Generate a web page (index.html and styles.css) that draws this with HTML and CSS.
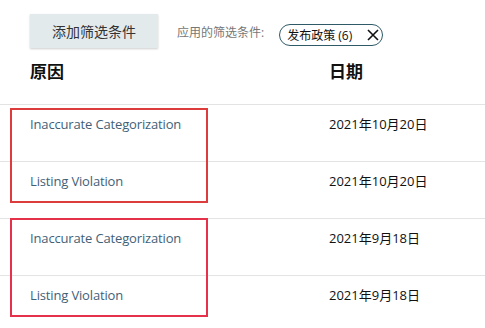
FILE: index.html
```html
<!DOCTYPE html>
<html lang="zh-CN">
<head>
  <meta charset="UTF-8" />
  <meta name="viewport" content="width=device-width, initial-scale=1.0"/>
  <title>政策违规</title>
  <link rel="stylesheet" href="styles.css">
</head>
<body>

<div class="page">
  <!-- filter bar -->
  <div class="toolbar">
    <button class="add-filter">添加筛选条件</button>
    <span class="applied-label">应用的筛选条件:</span>
    <span class="chip">发布政策 (6)
      <svg class="chip-x" width="12" height="12" viewBox="0 0 12 12">
        <path d="M1 1 L11 11 M11 1 L1 11" stroke="#111" stroke-width="1.6" fill="none"/>
      </svg>
    </span>
  </div>

  <!-- table -->
  <div class="table">
    <div class="row head">
      <div class="cell reason">原因</div>
      <div class="cell date">日期</div>
    </div>
    <div class="row">
      <div class="cell reason"><a href="#">Inaccurate Categorization</a></div>
      <div class="cell date">2021年10月20日</div>
    </div>
    <div class="row">
      <div class="cell reason"><a href="#">Listing Violation</a></div>
      <div class="cell date">2021年10月20日</div>
    </div>
    <div class="row">
      <div class="cell reason"><a href="#">Inaccurate Categorization</a></div>
      <div class="cell date">2021年9月18日</div>
    </div>
    <div class="row">
      <div class="cell reason"><a href="#">Listing Violation</a></div>
      <div class="cell date">2021年9月18日</div>
    </div>
  </div>

  <!-- annotation boxes -->
  <div class="mark mark-1"></div>
  <div class="mark mark-2"></div>
</div>

</body>
</html>
```

FILE: styles.css
```css
body {
  margin: 0;
  background: #fff;
  font-family: "Open Sans", "Noto Sans CJK SC", sans-serif;
  color: #0f1111;
}
.page {
  position: relative;
  height: 328px;
  overflow: hidden;
}
.toolbar {
  display: flex;
  align-items: flex-start;
  padding: 14px 0 0 30px;
  height: 34px;
}
.add-filter {
  width: 128px;
  height: 34px;
  border: none;
  background: #e3eaec;
  box-shadow: 0 1px 2px rgba(0, 0, 0, 0.2);
  font-family: inherit;
  font-size: 14px;
  color: #333;
  padding: 0;
  cursor: pointer;
}
.applied-label {
  margin: 11px 0 0 19px;
  font-size: 12px;
  line-height: 16px;
  color: #777;
}
.chip {
  display: flex;
  align-items: center;
  margin: 10px 0 0 15px;
  height: 20px;
  padding: 0 3px 0 7px;
  border: 1px solid #2f5b68;
  border-radius: 11px;
  font-size: 12px;
  color: #111;
}
.chip-x {
  margin-left: 15px;
}
.row {
  display: flex;
  height: 56px;
  border-top: 1px solid #e3e3e3;
}
.row.head {
  height: 56px;
  border-top: none;
  align-items: center;
}
.cell {
  padding-top: 9px;
  font-size: 13px;
  line-height: 20px;
}
.head .cell {
  padding-top: 0;
  padding-bottom: 8px;
  font-size: 17px;
  font-weight: bold;
}
.reason {
  width: 299px;
  padding-left: 30px;
}
.date {
  color: #111;
}
.reason a {
  color: #3f6178;
  text-decoration: none;
  letter-spacing: -0.15px;
}
.mark {
  position: absolute;
  left: 10px;
  width: 194px;
  border: 2px solid #dc3d3c;
}
.mark-1 {
  top: 108px;
  height: 91px;
}
.mark-2 {
  top: 218px;
  height: 95px;
  border-color: #e6314a;
}
```
